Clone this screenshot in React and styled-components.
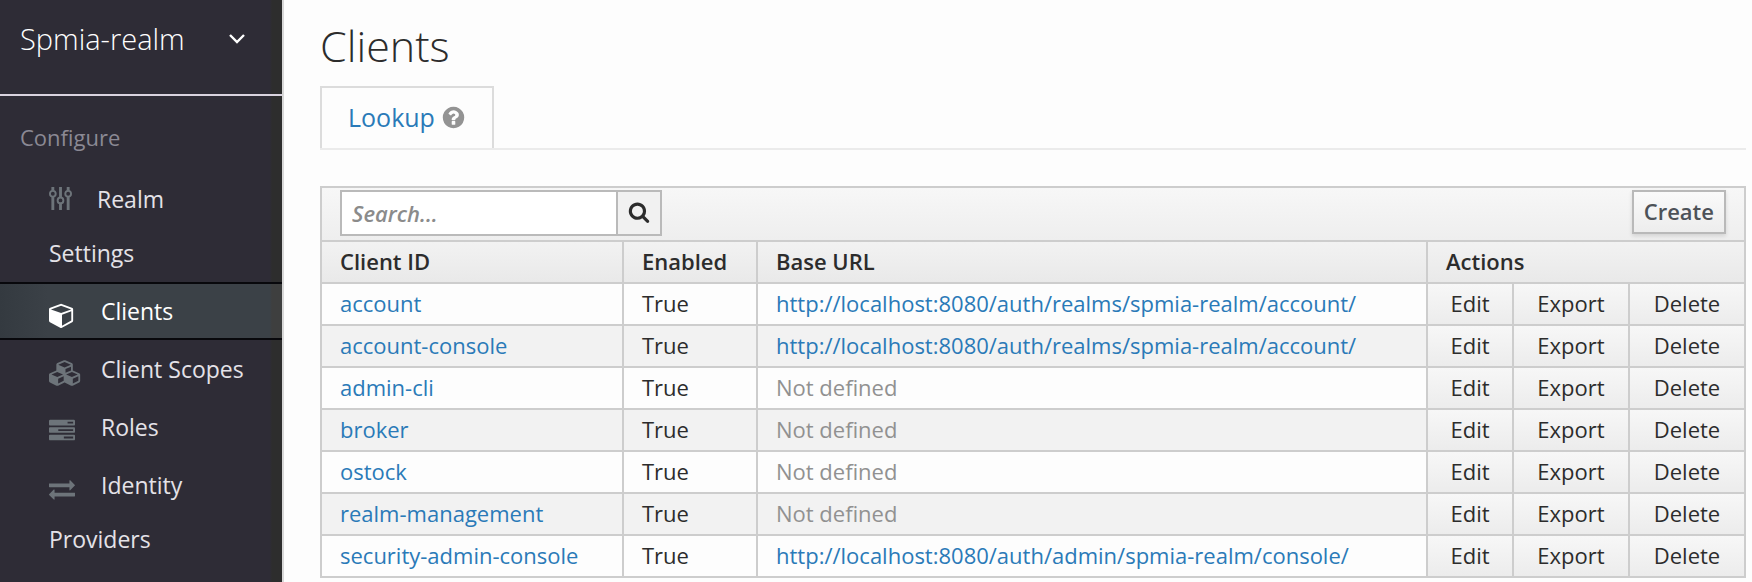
import React from "react";
import styled, { createGlobalStyle } from "styled-components";

const GlobalStyle = createGlobalStyle`
  *, *::before, *::after { box-sizing: border-box; }
  body {
    margin: 0;
    background: #fdfdfd;
    color: #2c2c2c;
    font: 22px/30px "Open Sans", "Noto Sans", sans-serif;
  }
  button, input { font: inherit; color: inherit; margin: 0; border-radius: 0; }
`;

const Page = styled.div`
  display: flex;
  min-height: 100vh;
`;

const Sidebar = styled.aside`
  flex: 0 0 284px;
  background: linear-gradient(to right, #2e2c36 270px, #2d2d2d 272px);
  border-right: 2px solid #d8d8d8;
`;

const RealmButton = styled.button`
  display: flex;
  align-items: center;
  justify-content: space-between;
  width: 100%;
  height: 96px;
  padding: 0 36px 16px 20px;
  border: 0;
  border-bottom: 2px solid #d9d3df;
  background: none;
  color: #fff;
  font-size: 29px;
  font-weight: 300;
`;

const SectionTitle = styled.h2`
  margin: 0;
  padding: 26px 20px 18px;
  color: #8b8994;
  font-size: 22px;
  font-weight: 400;
  line-height: 30px;
`;

const NavList = styled.ul`
  margin: 0;
  padding: 0;
  list-style: none;
`;

const NavLink = styled.a`
  display: block;
  padding: 0 34px 0 49px;
  border: solid ${(p) => (p.$active ? "#08080c" : "transparent")};
  border-width: 2px 0;
  background: ${(p) => (p.$active ? "linear-gradient(to right, #343a40, #3b4147 48px 270px, #3e3f3f 272px)" : "none")};
  color: ${(p) => (p.$active ? "#fff" : "#e4e2e8")};
  font-size: 23px;
  line-height: 54px;
  text-decoration: none;
`;

const NavIcon = styled.span`
  display: inline-block;
  width: ${(p) => p.$slot}px;
  color: ${(p) => (p.$active ? "#fff" : "#6d747a")};

  svg { display: inline-block; vertical-align: ${(p) => p.$align}px; }
`;

const Main = styled.main`
  flex: 1;
  min-width: 0;
  padding: 16px 6px 4px 36px;
`;

const Title = styled.h1`
  margin: 0 0 10px;
  font-size: 43px;
  font-weight: 300;
  line-height: 60px;
`;

const Tabs = styled.div`
  display: flex;
  margin-bottom: 36px;
  border-bottom: 2px solid #ebebeb;
`;

const Tab = styled.div`
  display: flex;
  align-items: center;
  gap: 6px;
  height: 62px;
  padding: 0 26px 2px;
  border: 2px solid #dcdcdc;
  border-bottom: 0;
  font-size: 25px;
`;

const Link = styled.a`
  color: #2a7ab8;
  text-decoration: none;
`;

const HelpButton = styled.button`
  display: flex;
  padding: 0;
  border: 0;
  background: none;
  color: #939393;
`;

const Panel = styled.section`
  border: 2px solid #cdcdcd;
`;

const Toolbar = styled.div`
  display: flex;
  align-items: flex-start;
  justify-content: space-between;
  height: 54px;
  padding: 2px 18px 0;
  border-bottom: 2px solid #cdcdcd;
  background: linear-gradient(#f7f7f7, #eeeeee);
`;

const SearchForm = styled.form`
  display: flex;
  height: 46px;
`;

const SearchInput = styled.input`
  width: 278px;
  padding: 0 10px;
  border: 2px solid #bababa;
  background: #fff;
  outline: 0;

  &::placeholder { color: #8b8b8b; font-style: italic; font-weight: 600; opacity: 1; }
`;

const SearchButton = styled.button`
  display: flex;
  align-items: center;
  justify-content: center;
  width: 44px;
  padding: 0 0 2px;
  border: 2px solid #bababa;
  border-left: 0;
  background: #f1f1f1;
`;

const CreateButton = styled.button`
  height: 44px;
  padding: 0 10px 2px;
  border: 2px solid #b9b9b9;
  background: linear-gradient(#fafafa, #ededed);
  box-shadow: 0 2px 4px rgba(0, 0, 0, 0.12);
  color: #4d5258;
  font-weight: 600;
  line-height: 36px;
`;

const Table = styled.table`
  width: 100%;
  table-layout: fixed;
  border-collapse: separate;
  border-spacing: 0;
`;

const Col = styled.col`
  width: ${(p) => (p.$width ? `${p.$width}px` : "auto")};
`;

const HeadCell = styled.th`
  height: 42px;
  padding: 0 18px 2px;
  border: solid #cdcdcd;
  border-width: 0 2px 2px 0;
  background: linear-gradient(#f2f2f2, #e9e9e9);
  font-weight: 600;
  text-align: left;

  &:last-child { border-right: 0; }
`;

const Cell = styled.td`
  height: 42px;
  padding: 0 18px 2px;
  border: solid #cdcdcd;
  border-width: 0 2px 2px 0;
  white-space: nowrap;
`;

const ActionCell = styled(Cell)`
  padding: 0;
  background: linear-gradient(#f7f7f7, #ececec);

  &:last-child { border-right: 0; }
`;

const ActionButton = styled.button`
  display: block;
  width: 100%;
  height: 40px;
  padding: 0 0 2px;
  border: 0;
  background: none;
  line-height: 30px;
`;

const Row = styled.tr`
  background: #fdfdfd;

  &:nth-child(even) { background: #f2f2f2; }
  &:last-child ${Cell} { height: 40px; border-bottom: 0; }
`;

const Muted = styled.span`
  color: #919191;
`;

const Glyph = ({ w = 1792, size = 26, d }) => (
  <svg viewBox={`0 0 ${w} 1792`} width={Math.round((size * w) / 1792)} height={size} fill="currentColor" aria-hidden="true">
    <path d={d} />
  </svg>
);

const SlidersIcon = () => (
  <svg viewBox="0 0 24 26" width="23" height="25" fill="none" stroke="currentColor" strokeWidth="3" aria-hidden="true">
    <path d="M4 1v4M4 11v14M12 1v11M12 18v7M20 1v4M20 11v14" />
    <g strokeWidth="2">
      <circle cx="4" cy="8" r="3" />
      <circle cx="12" cy="15" r="3" />
      <circle cx="20" cy="8" r="3" />
    </g>
  </svg>
);

const CubeIcon = () => (
  <Glyph d="M896 1629l640-349v-636l-640 233v752zm-64-865l698-254-698-254-698 254zm832-252v768q0 35-18 65t-49 47l-704 384q-28 16-61 16t-61-16l-704-384q-31-17-49-47t-18-65v-768q0-40 23-73t61-47l704-256q22-8 44-8t44 8l704 256q38 14 61 47t23 73z" />
);

const CubesIcon = () => (
  <Glyph
    w={2304}
    d="M640 1632l384-192v-314l-384 164v342zm-64-454l404-173-404-173-404 173zm1088 454l384-192v-314l-384 164v342zm-64-454l404-173-404-173-404 173zm-448-293l384-165v-266l-384 164v267zm-64-379l441-189-441-189-441 189zm1088 518v416q0 36-19 67t-52 47l-448 224q-25 14-57 14t-57-14l-448-224q-4-2-7-4-2 2-7 4l-448 224q-25 14-57 14t-57-14l-448-224q-33-16-52-47t-19-67v-416q0-38 21.5-70t56.5-48l434-186v-400q0-38 21.5-70t56.5-48l448-192q23-10 50-10t50 10l448 192q35 16 56.5 48t21.5 70v400l434 186q36 16 57 48t21 70z"
  />
);

const TasksIcon = () => (
  <Glyph
    d="M1024 1408h640v-128h-640v128zm-384-512h1024v-128h-1024v128zm640-512h384v-128h-384v128zm512 832v256q0 26-19 45t-45 19h-1664q-26 0-45-19t-19-45v-256q0-26 19-45t45-19h1664q26 0 45 19t19 45zm0-512v256q0 26-19 45t-45 19h-1664q-26 0-45-19t-19-45v-256q0-26 19-45t45-19h1664q26 0 45 19t19 45zm0-512v256q0 26-19 45t-45 19h-1664q-26 0-45-19t-19-45v-256q0-26 19-45t45-19h1664q26 0 45 19t19 45z"
  />
);

const ExchangeIcon = () => (
  <Glyph
    d="M1792 1184v192q0 13-9.5 22.5t-22.5 9.5h-1376v192q0 13-9.5 22.5t-22.5 9.5q-12 0-24-10l-319-320q-9-9-9-22 0-14 9-23l320-320q9-9 23-9 13 0 22.5 9.5t9.5 22.5v192h1376q13 0 22.5 9.5t9.5 22.5zm0-544q0 14-9 23l-320 320q-9 9-23 9-13 0-22.5-9.5t-9.5-22.5v-192h-1376q-13 0-22.5-9.5t-9.5-22.5v-192q0-13 9.5-22.5t22.5-9.5h1376v-192q0-14 9-23t23-9q12 0 24 10l319 319q9 9 9 23z"
  />
);

const HelpIcon = () => (
  <Glyph
    size={25}
    d="M1024 1376v-192q0-14-9-23t-23-9h-192q-14 0-23 9t-9 23v192q0 14 9 23t23 9h192q14 0 23-9t9-23zm256-672q0-88-55.5-163t-138.5-116-170-41q-243 0-371 213-15 24 8 42l132 100q7 6 19 6 16 0 25-12 53-68 86-92 34-24 86-24 48 0 85.5 26t37.5 59q0 38-20 61t-68 45q-63 28-115.5 86.5t-52.5 125.5v36q0 14 9 23t23 9h192q14 0 23-9t9-23q0-19 21.5-49.5t54.5-49.5q32-18 49-28.5t46-35 44.5-48 28-60.5 12.5-81zm384 192q0 209-103 385.5t-279.5 279.5-385.5 103-385.5-103-279.5-279.5-103-385.5 103-385.5 279.5-279.5 385.5-103 385.5 103 279.5 279.5 103 385.5z"
  />
);

const SearchIcon = () => (
  <Glyph
    size={22}
    d="M1216 832q0-185-131.5-316.5t-316.5-131.5-316.5 131.5-131.5 316.5 131.5 316.5 316.5 131.5 316.5-131.5 131.5-316.5zm512 832q0 52-38 90t-90 38q-54 0-90-38l-343-342q-179 124-399 124-143 0-273.5-55.5t-225-150-150-225-55.5-273.5 55.5-273.5 150-225 225-150 273.5-55.5 273.5 55.5 225 150 150 225 55.5 273.5q0 220-124 399l343 343q37 37 37 90z"
  />
);

const ChevronIcon = () => (
  <svg viewBox="0 0 18 12" width="18" height="12" fill="none" stroke="currentColor" strokeWidth="2.4" aria-hidden="true">
    <path d="M2 2l7 7 7-7" />
  </svg>
);

const NAV = [
  { label: "Realm Settings", Icon: SlidersIcon, slot: 48, align: -3 },
  { label: "Clients", Icon: CubeIcon, slot: 52, align: -8, active: true },
  { label: "Client Scopes", Icon: CubesIcon, slot: 52, align: -8 },
  { label: "Roles", Icon: TasksIcon, slot: 52, align: -8 },
  { label: "Identity Providers", Icon: ExchangeIcon, slot: 52, align: -8 },
];

const ACCOUNT_URL = "http://localhost:8080/auth/realms/spmia-realm/account/";

const CLIENTS = [
  { id: "account", url: ACCOUNT_URL },
  { id: "account-console", url: ACCOUNT_URL },
  { id: "admin-cli" },
  { id: "broker" },
  { id: "ostock" },
  { id: "realm-management" },
  { id: "security-admin-console", url: "http://localhost:8080/auth/admin/spmia-realm/console/" },
];

const ACTIONS = ["Edit", "Export", "Delete"];

export default function App() {
  return (
    <Page>
      <GlobalStyle />
      <Sidebar>
        <RealmButton type="button">
          Spmia-realm
          <ChevronIcon />
        </RealmButton>
        <nav>
          <SectionTitle>Configure</SectionTitle>
          <NavList>
            {NAV.map(({ label, Icon, slot, align, active }) => (
              <li key={label}>
                <NavLink href="#" $active={active}>
                  <NavIcon $slot={slot} $align={align} $active={active}>
                    <Icon />
                  </NavIcon>
                  {label}
                </NavLink>
              </li>
            ))}
          </NavList>
        </nav>
      </Sidebar>
      <Main>
        <Title>Clients</Title>
        <Tabs>
          <Tab>
            <Link href="#">Lookup</Link>
            <HelpButton type="button" aria-label="Help">
              <HelpIcon />
            </HelpButton>
          </Tab>
        </Tabs>
        <Panel>
          <Toolbar>
            <SearchForm onSubmit={(e) => e.preventDefault()}>
              <SearchInput type="text" placeholder="Search..." aria-label="Search clients" />
              <SearchButton type="submit" aria-label="Search">
                <SearchIcon />
              </SearchButton>
            </SearchForm>
            <CreateButton type="button">Create</CreateButton>
          </Toolbar>
          <Table>
            <colgroup>
              <Col $width={302} />
              <Col $width={134} />
              <Col />
              <Col $width={86} />
              <Col $width={116} />
              <Col $width={114} />
            </colgroup>
            <thead>
              <tr>
                <HeadCell scope="col">Client ID</HeadCell>
                <HeadCell scope="col">Enabled</HeadCell>
                <HeadCell scope="col">Base URL</HeadCell>
                <HeadCell scope="colgroup" colSpan={3}>Actions</HeadCell>
              </tr>
            </thead>
            <tbody>
              {CLIENTS.map(({ id, url }) => (
                <Row key={id}>
                  <Cell><Link href="#">{id}</Link></Cell>
                  <Cell>True</Cell>
                  <Cell>{url ? <Link href={url}>{url}</Link> : <Muted>Not defined</Muted>}</Cell>
                  {ACTIONS.map((action) => (
                    <ActionCell key={action}>
                      <ActionButton type="button">{action}</ActionButton>
                    </ActionCell>
                  ))}
                </Row>
              ))}
            </tbody>
          </Table>
        </Panel>
      </Main>
    </Page>
  );
}
